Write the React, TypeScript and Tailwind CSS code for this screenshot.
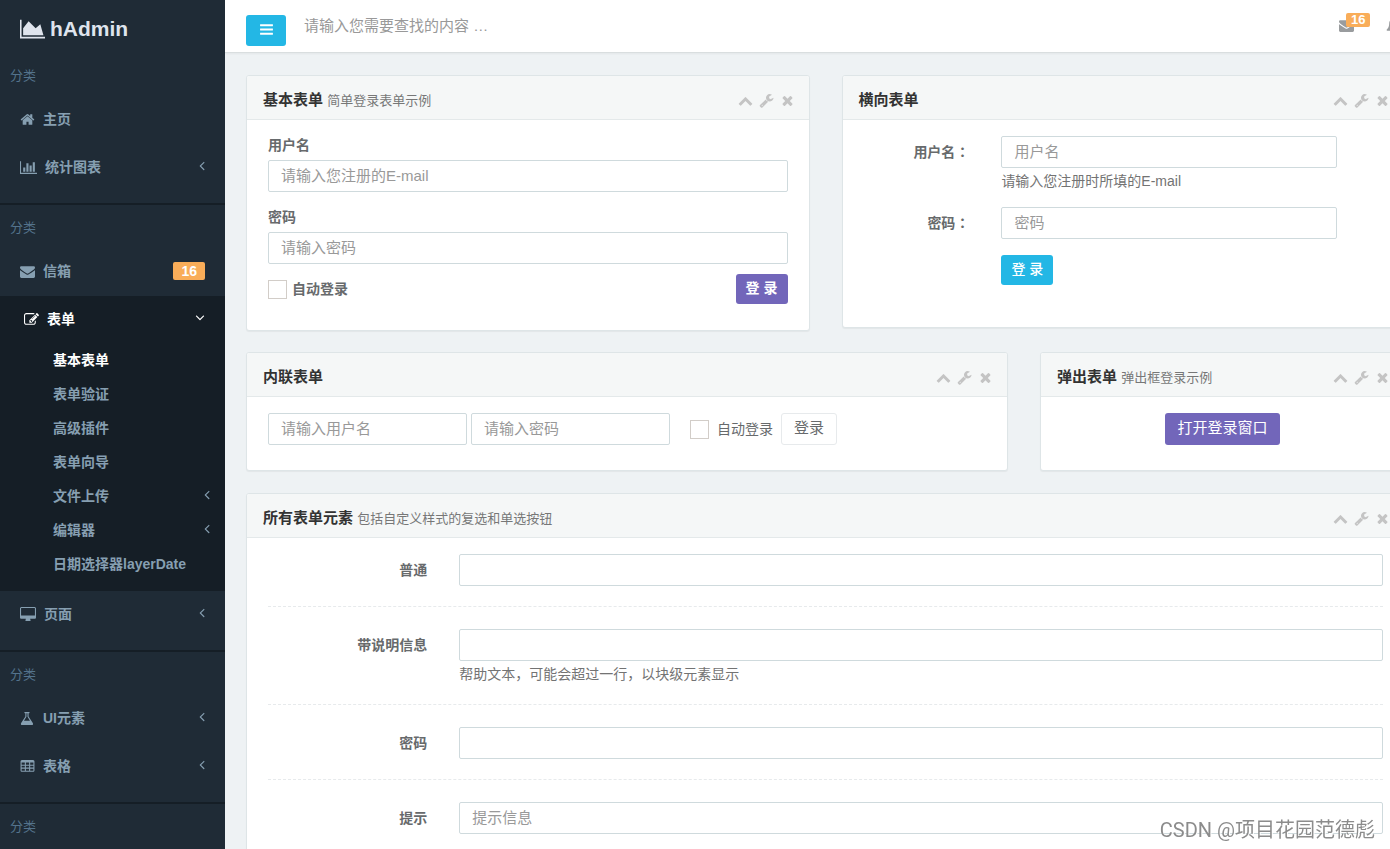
import { useState } from "react";
import type { ReactNode } from "react";

const paths = {
  area: "M2048 1536v128h-2048v-1536h128v1408h1920zm-384-1024l256 896h-1664v-576l448-576 576 576z",
  bars: "M1664 1344v128q0 26-19 45t-45 19h-1408q-26 0-45-19t-19-45v-128q0-26 19-45t45-19h1408q26 0 45 19t19 45zm0-512v128q0 26-19 45t-45 19h-1408q-26 0-45-19t-19-45v-128q0-26 19-45t45-19h1408q26 0 45 19t19 45zm0-512v128q0 26-19 45t-45 19h-1408q-26 0-45-19t-19-45v-128q0-26 19-45t45-19h1408q26 0 45 19t19 45z",
  home: "M1472 992v480q0 26-19 45t-45 19h-384v-384h-256v384h-384q-26 0-45-19t-19-45v-480q0-1 .5-3t.5-3l575-474 575 474q1 2 1 6zm223-69l-62 74q-8 9-21 11h-3q-13 0-21-7l-692-577-692 577q-12 8-24 7-13-2-21-11l-62-74q-8-10-7-23.5t11-21.5l719-599q32-26 76-26t76 26l244 204v-195q0-14 9-23t23-9h192q14 0 23 9t9 23v408l219 182q10 8 11 21.5t-7 23.5z",
  chart:
    "M640 896v512h-256v-512h256zm384-512v1024h-256v-1024h256zm1024 1152v128h-2048v-1536h128v1408h1920zm-640-896v768h-256v-768h256zm384-384v1152h-256v-1152h256z",
  envelope:
    "M1792 710v794q0 66-47 113t-113 47h-1472q-66 0-113-47t-47-113v-794q44 49 101 87 362 246 497 345 57 42 92.5 65.5t94.5 48 110 24.5h2q51 0 110-24.5t94.5-48 92.5-65.5q170-123 498-345 57-39 100-87zm0-294q0 79-49 151t-122 123q-376 261-468 325-10 7-42.5 31t-54 38.5-52 32.5-57.5 27-50 9h-2q-23 0-50-9t-57.5-27-52-32.5-54-38.5-42.5-31q-91-64-262-182.5t-205-142.5q-62-42-117-115.5t-55-136.5q0-78 41.5-130t118.5-52h1472q65 0 112.5 47t47.5 113z",
  edit: "M888 1184l116-116-152-152-116 116v56h96v96h56zm440-720q-16-16-33 1l-350 350q-17 17-1 33t33-1l350-350q17-17 1-33zm80 594v190q0 119-84.5 203.5t-203.5 84.5h-832q-119 0-203.5-84.5t-84.5-203.5v-832q0-119 84.5-203.5t203.5-84.5h832q63 0 117 25 15 7 18 23 3 17-9 29l-49 49q-14 14-32 8-23-6-45-6h-832q-66 0-113 47t-47 113v832q0 66 47 113t113 47h832q66 0 113-47t47-113v-126q0-13 9-22l64-64q15-15 35-7t20 29zm-96-738l288 288-672 672h-288v-288zm444 132l-92 92-288-288 92-92q28-28 68-28t68 28l152 152q28 28 28 68t-28 68z",
  desktop:
    "M1792 992v-832q0-13-9.5-22.5t-22.5-9.5h-1600q-13 0-22.5 9.5t-9.5 22.5v832q0 13 9.5 22.5t22.5 9.5h1600q13 0 22.5-9.5t9.5-22.5zm128-832v1088q0 66-47 113t-113 47h-544q0 37 16 77.5t32 71 16 43.5q0 26-19 45t-45 19h-512q-26 0-45-19t-19-45q0-14 16-44t32-70 16-78h-544q-66 0-113-47t-47-113v-1088q0-66 47-113t113-47h1600q66 0 113 47t47 113z",
  flask:
    "M1527 1448q56 89 21.5 152.5t-140.5 63.5h-1152q-106 0-140.5-63.5t21.5-152.5l503-793v-399h-64q-26 0-45-19t-19-45 19-45 45-19h512q26 0 45 19t19 45-19 45-45 19h-64v399zm-779-725l-272 429h712l-272-429-20-31v-436h-128v436z",
  table:
    "M1728 288v1088q0 66-47 113t-113 47h-1344q-66 0-113-47t-47-113v-1088q0-66 47-113t113-47h1344q66 0 113 47t47 113zM192 416h384v256h-384zM704 416h384v256h-384zM1216 416h384v256h-384zM192 800h384v224h-384zM704 800h384v224h-384zM1216 800h384v224h-384zM192 1152h384v256h-384zM704 1152h384v256h-384zM1216 1152h384v256h-384z",
  wrench:
    "M448 1472q0-26-19-45t-45-19-45 19-19 45 19 45 45 19 45-19 19-45zm644-420l-682 682q-37 37-90 37-52 0-91-37l-106-108q-38-36-38-90 0-53 38-91l681-681q39 98 114.5 173.5t173.5 114.5zm634-435q0 39-23 106-47 134-164.5 217.5t-258.5 83.5q-185 0-316.5-131.5t-131.5-316.5 131.5-316.5 316.5-131.5q58 0 121.5 16.5t107.5 46.5q16 11 16 28t-16 28l-293 169v224l193 107q5-3 79-48.5t135.5-81 70.5-35.5q15 0 23.5 10t8.5 25z",
  times:
    "M1490 1322q0 40-28 68l-136 136q-28 28-68 28t-68-28l-294-294-294 294q-28 28-68 28t-68-28l-136-136q-28-28-28-68t28-68l294-294-294-294q-28-28-28-68t28-68l136-136q28-28 68-28t68 28l294 294 294-294q28-28 68-28t68 28l136 136q28 28 28 68t-28 68l-294 294 294 294q28 28 28 68z",
  up: "M1683 1331l-166 165q-19 19-45 19t-45-19l-531-531-531 531q-19 19-45 19t-45-19l-166-165q-19-19-19-45.5t19-45.5l742-741q19-19 45-19t45 19l742 741q19 19 19 45.5t-19 45.5z",
  left: "M1203 544q0 13-10 23l-393 393 393 393q10 10 10 23t-10 23l-50 50q-10 10-23 10t-23-10l-466-466q-10-10-10-23t10-23l466-466q10-10 23-10t23 10l50 50q10 10 10 23z",
  down: "M1395 736q0 13-10 23l-466 466q-10 10-23 10t-23-10l-466-466q-10-10-10-23t10-23l50-50q10-10 23-10t23 10l393 393 393-393q10-10 23-10t23 10l50 50q10 10 10 23z",
  bell: "M1728 1408q0 52-38 90t-90 38h-448q0 106-75 181t-181 75-181-75-75-181h-448q-52 0-90-38t-38-90q50-42 91-88t85-119.5 74.5-158.5 50-206 19.5-260q0-152 117-282.5t307-158.5q-8-19-8-39 0-40 28-68t68-28 68 28 28 68q0 20-8 39 190 28 307 158.5t117 282.5q0 139 19.5 260t50 206 74.5 158.5 85 119.5 91 88z",
};

type IconName = keyof typeof paths;

function Icon({
  name,
  viewBox = "0 0 1792 1792",
  className = "h-[15px] w-[15px]",
}: {
  name: IconName;
  viewBox?: string;
  className?: string;
}) {
  return (
    <svg
      viewBox={viewBox}
      fill="currentColor"
      fillRule="evenodd"
      aria-hidden="true"
      className={`shrink-0 ${className}`}
    >
      <path d={paths[name]} />
    </svg>
  );
}

function Arrow({ open }: { open?: boolean }) {
  return open ? (
    <Icon
      name="down"
      viewBox="320 0 1152 1792"
      className="mb-[3px] h-[15px] w-[10px]"
    />
  ) : (
    <Icon
      name="left"
      viewBox="544 0 717 1792"
      className="mb-[3px] h-[15px] w-[6px]"
    />
  );
}

function NavHeading() {
  return (
    <div className="flex h-[43px] items-center pl-[10px] pt-[2px] text-[13px] text-[#54738c]">
      分类
    </div>
  );
}

function NavItem({
  icon,
  label,
  active,
  badge,
  arrow,
}: {
  icon: ReactNode;
  label: string;
  active?: boolean;
  badge?: string;
  arrow?: boolean;
}) {
  return (
    <a
      href="#"
      className={`flex h-12 items-center gap-2 pb-[2px] pr-5 text-sm font-bold ${
        active ? "pl-6 text-white" : "pl-5"
      }`}
    >
      {icon}
      <span className="flex-1">{label}</span>
      {badge && (
        <span className="rounded-xs bg-[#f9ad59] px-2 text-sm leading-[18px] text-white">
          {badge}
        </span>
      )}
      {arrow && <Arrow open={active} />}
    </a>
  );
}

const formLinks = [
  { label: "基本表单", active: true },
  { label: "表单验证" },
  { label: "高级插件" },
  { label: "表单向导" },
  { label: "文件上传", arrow: true },
  { label: "编辑器", arrow: true },
  { label: "日期选择器layerDate" },
];

function Sidebar() {
  const divider = <div className="mt-[11px] h-[2px] bg-[#151e26]" />;

  return (
    <nav className="w-[225px] shrink-0 overflow-hidden bg-[#1f2b36] text-[#869fb1]">
      <a
        href="#"
        className="flex h-[53px] items-center gap-[5px] pl-5 pt-1 text-[21px] font-bold text-[#dfe4ed]"
      >
        <Icon
          name="area"
          viewBox="0 0 2048 1792"
          className="h-[22px] w-[25px]"
        />
        hAdmin
      </a>
      <NavHeading />
      <NavItem icon={<Icon name="home" />} label="主页" />
      <NavItem
        icon={
          <Icon
            name="chart"
            viewBox="0 0 2048 1792"
            className="h-[15px] w-[17px]"
          />
        }
        label="统计图表"
        arrow
      />
      {divider}
      <NavHeading />
      <NavItem icon={<Icon name="envelope" />} label="信箱" badge="16" />
      <div className="bg-[#151e26] pb-[9px]">
        <NavItem icon={<Icon name="edit" />} label="表单" active arrow />
        <ul>
          {formLinks.map((link) => (
            <li key={link.label}>
              <a
                href="#"
                className={`flex h-[34px] items-center justify-between pb-[2px] pl-[53px] pr-[15px] text-sm font-bold ${
                  link.active ? "text-white" : ""
                }`}
              >
                {link.label}
                {link.arrow && <Arrow />}
              </a>
            </li>
          ))}
        </ul>
      </div>
      <NavItem
        icon={
          <Icon
            name="desktop"
            viewBox="0 0 1920 1792"
            className="h-[15px] w-[16px]"
          />
        }
        label="页面"
        arrow
      />
      {divider}
      <NavHeading />
      <NavItem icon={<Icon name="flask" />} label="UI元素" arrow />
      <NavItem icon={<Icon name="table" />} label="表格" arrow />
      {divider}
      <NavHeading />
    </nav>
  );
}

function TopBar() {
  return (
    <header className="-mr-4 flex h-[53px] items-center border-b border-[#d9dedf] bg-white pl-[21px] pr-[5px] shadow-xs">
      <button
        aria-label="切换菜单"
        className="mt-2 flex h-[31px] w-10 items-center justify-center rounded-[3px] bg-[#23b7e5] pb-[2px] text-white"
      >
        <Icon name="bars" />
      </button>
      <input
        type="text"
        aria-label="搜索"
        placeholder="请输入您需要查找的内容 …"
        className="ml-[18px] h-8 flex-1 pb-[2px] text-[15px] outline-none placeholder:text-[#999]"
      />
      <div className="flex gap-8 pb-px text-[#999c9e]">
        <a href="#" aria-label="信箱" className="relative">
          <Icon name="envelope" />
          <span className="absolute -top-[5px] left-[7px] rounded-xs bg-[#f9ad59] px-[5px] text-[13px] font-bold leading-[14px] text-white">
            16
          </span>
        </a>
        <a href="#" aria-label="通知">
          <Icon name="bell" />
        </a>
      </div>
    </header>
  );
}

function Panel({
  title,
  note,
  className = "",
  children,
}: {
  title: string;
  note?: string;
  className?: string;
  children: ReactNode;
}) {
  const [open, setOpen] = useState(true);

  return (
    <section
      className={`rounded-[3px] border border-[#dee5e7] bg-white shadow-[0_1px_1px_rgba(0,0,0,0.05)] ${className}`}
    >
      <div className="flex h-11 items-center justify-between rounded-t-[2px] border-b border-[#e4e9ea] bg-[#f5f7f7] pl-4 pr-[14px] pt-[6px]">
        <h5 className="text-[15px] font-bold text-[#333]">
          {title}{" "}
          {note && (
            <small className="text-[13px] font-normal text-[#777]">
              {note}
            </small>
          )}
        </h5>
        <div className="flex gap-[6px] text-[#c4c4c4]">
          <button aria-label="折叠" onClick={() => setOpen(!open)}>
            <Icon name="up" />
          </button>
          <button aria-label="设置">
            <Icon name="wrench" />
          </button>
          <button aria-label="关闭">
            <Icon name="times" />
          </button>
        </div>
      </div>
      {open && <div className="px-[21px] pb-[25px] pt-4">{children}</div>}
    </section>
  );
}

function TextInput({
  id,
  type = "text",
  placeholder,
  label,
  className = "w-full",
}: {
  id: string;
  type?: string;
  placeholder?: string;
  label?: string;
  className?: string;
}) {
  return (
    <input
      id={id}
      type={type}
      aria-label={label}
      placeholder={placeholder}
      className={`block h-8 rounded-[2px] border border-[#cfdadd] bg-white px-3 pb-[2px] text-[15px] outline-none placeholder:text-[#999] ${className}`}
    />
  );
}

function Checkbox({ id }: { id: string }) {
  return (
    <input
      id={id}
      type="checkbox"
      className="size-[19px] appearance-none border border-[#d2cdc8] bg-white checked:bg-[#23b7e5]"
    />
  );
}

// the TC face centres the full-width colon in its cell
function Colon() {
  return (
    <span className="font-['Noto_Sans_CJK_TC',sans-serif] leading-none">
      ：
    </span>
  );
}

function Help({ children }: { children: ReactNode }) {
  return (
    <p className="mt-1 text-sm leading-[19px] text-[#737373]">{children}</p>
  );
}

function FieldRow({
  id,
  label,
  type,
  placeholder,
  help,
}: {
  id: string;
  label: string;
  type?: string;
  placeholder?: string;
  help?: string;
}) {
  return (
    <div className="-mx-4 flex">
      <label
        htmlFor={id}
        className="w-1/6 px-4 text-right text-sm font-bold leading-8"
      >
        {label}
      </label>
      <div className="w-5/6 px-4">
        <TextInput id={id} type={type} placeholder={placeholder} />
        {help && <Help>{help}</Help>}
      </div>
    </div>
  );
}

function BasicForm() {
  return (
    <form className="pb-px">
      <label
        htmlFor="email"
        className="mb-[5px] block text-sm font-bold leading-[19px]"
      >
        用户名
      </label>
      <TextInput id="email" type="email" placeholder="请输入您注册的E-mail" />
      <label
        htmlFor="pwd"
        className="mb-[5px] mt-4 block text-sm font-bold leading-[19px]"
      >
        密码
      </label>
      <TextInput id="pwd" type="password" placeholder="请输入密码" />
      <div className="mt-[10px] flex items-center gap-[5px]">
        <Checkbox id="remember" />
        <label htmlFor="remember" className="flex-1 text-sm font-bold">
          自动登录
        </label>
        <button
          type="button"
          className="h-[30px] rounded-[3px] bg-[#7266ba] px-[10px] pb-[2px] text-sm font-bold text-white"
        >
          登 录
        </button>
      </div>
    </form>
  );
}

function HorizontalForm() {
  return (
    <form className="-mx-4 flex flex-col gap-4 pb-[17px]">
      <div className="flex">
        <label
          htmlFor="h-user"
          className="w-1/4 px-4 text-right text-sm font-bold leading-8"
        >
          用户名
          <Colon />
        </label>
        <div className="w-2/3 px-4">
          <TextInput id="h-user" placeholder="用户名" />
          <Help>请输入您注册时所填的E-mail</Help>
        </div>
      </div>
      <div className="flex">
        <label
          htmlFor="h-pwd"
          className="w-1/4 px-4 text-right text-sm font-bold leading-8"
        >
          密码
          <Colon />
        </label>
        <div className="w-2/3 px-4">
          <TextInput id="h-pwd" type="password" placeholder="密码" />
        </div>
      </div>
      <div className="ml-[25%] px-4">
        <button
          type="button"
          className="block h-[30px] rounded-[3px] bg-[#23b7e5] px-[10px] pb-[2px] text-sm font-medium text-white"
        >
          登 录
        </button>
      </div>
    </form>
  );
}

function InlineForm() {
  return (
    <form className="flex items-center">
      <TextInput
        id="i-user"
        label="用户名"
        placeholder="请输入用户名"
        className="w-[199px]"
      />
      <TextInput
        id="i-pwd"
        type="password"
        label="密码"
        placeholder="请输入密码"
        className="ml-1 mr-5 w-[199px]"
      />
      <Checkbox id="i-remember" />
      <label htmlFor="i-remember" className="mx-2 text-sm">
        自动登录
      </label>
      <button
        type="button"
        className="h-8 rounded-[3px] border border-[#e7eaec] bg-white px-3 pb-[2px] text-[15px]"
      >
        登录
      </button>
    </form>
  );
}

export default function App() {
  const line = <hr className="mb-[22px] mt-5 border-dashed border-[#e7eaec]" />;

  return (
    <div className="flex h-screen overflow-hidden bg-[#eef2f4] font-['Liberation_Sans','Noto_Sans_CJK_SC',sans-serif] text-[#676a6c]">
      <Sidebar />
      <main className="min-w-0 flex-1 overflow-hidden">
        <TopBar />
        <div className="-mr-[15px] flex flex-col gap-[21px] pl-[21px] pt-[22px]">
          <div className="grid grid-cols-2 items-start gap-8">
            <Panel title="基本表单" note="简单登录表单示例">
              <BasicForm />
            </Panel>
            <Panel title="横向表单">
              <HorizontalForm />
            </Panel>
          </div>
          <div className="grid grid-cols-3 items-start gap-8 pb-px">
            <Panel title="内联表单" className="col-span-2">
              <InlineForm />
            </Panel>
            <Panel title="弹出表单" note="弹出框登录示例">
              <button className="mx-auto block h-8 rounded-[3px] bg-[#7266ba] px-3 pb-[2px] text-[15px] text-white">
                打开登录窗口
              </button>
            </Panel>
          </div>
          <Panel title="所有表单元素" note="包括自定义样式的复选和单选按钮">
            <form>
              <FieldRow id="normal" label="普通" />
              {line}
              <FieldRow
                id="with-help"
                label="带说明信息"
                help="帮助文本，可能会超过一行，以块级元素显示"
              />
              {line}
              <FieldRow id="password" label="密码" type="password" />
              {line}
              <FieldRow id="hint" label="提示" placeholder="提示信息" />
            </form>
          </Panel>
        </div>
      </main>
      <div className="pointer-events-none fixed bottom-[5px] right-[15px] font-['Roboto','Noto_Sans_CJK_SC',sans-serif] text-xl text-[#8c8c8c] [text-shadow:1px_1px_0_#fff]">
        CSDN @项目花园范德彪
      </div>
    </div>
  );
}
